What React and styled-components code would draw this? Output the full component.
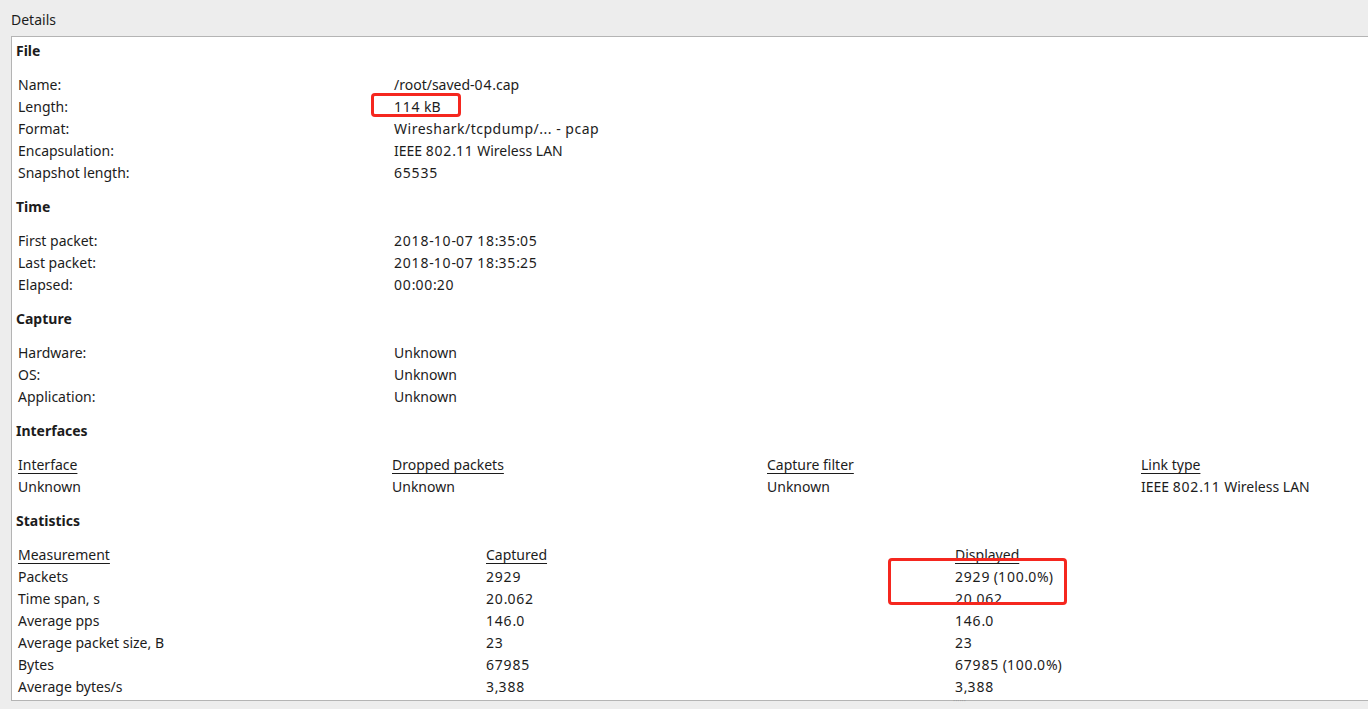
import React from "react";
import styled, { createGlobalStyle } from "styled-components";

const GlobalStyle = createGlobalStyle`
  html, body {
    margin: 0;
    padding: 0;
    overflow: hidden;
    background: #ededed;
  }
  body {
    font-family: "Noto Sans", "Open Sans", sans-serif;
    font-size: 14px;
    color: #1c1c1c;
  }
`;

const file = [
  ["Name:", "/root/saved-04.cap"],
  ["Length:", "114 kB"],
  ["Format:", "Wireshark/tcpdump/... - pcap"],
  ["Encapsulation:", "IEEE 802.11 Wireless LAN"],
  ["Snapshot length:", "65535"],
];

const time = [
  ["First packet:", "2018-10-07 18:35:05"],
  ["Last packet:", "2018-10-07 18:35:25"],
  ["Elapsed:", "00:00:20"],
];

const capture = [
  ["Hardware:", "Unknown"],
  ["OS:", "Unknown"],
  ["Application:", "Unknown"],
];

const interfaces = {
  head: ["Interface", "Dropped packets", "Capture filter", "Link type"],
  rows: [["Unknown", "Unknown", "Unknown", "IEEE 802.11 Wireless LAN"]],
};

const stats = {
  head: ["Measurement", "Captured", "Displayed"],
  rows: [
    ["Packets", "2929", "2929 (100.0%)"],
    ["Time span, s", "20.062", "20.062"],
    ["Average pps", "146.0", "146.0"],
    ["Average packet size, B", "23", "23"],
    ["Bytes", "67985", "67985 (100.0%)"],
    ["Average bytes/s", "3,388", "3,388"],
  ],
};

function Text({ value }) {
  return value
    .split(/(\d+)/)
    .map((part, i) => (/^\d+$/.test(part) ? <Num key={i}>{part}</Num> : part));
}

function Section({ title, cols, head, rows }) {
  return (
    <SectionBox>
      <Heading>{title}</Heading>
      <Table $cols={cols}>
        {head && head.map((h) => <HeadCell key={h}>{h}</HeadCell>)}
        {rows.map((r, i) =>
          r.map((c, j) => (
            <Cell key={i + "-" + j} $wide={c.includes("...")}>
              <Text value={c} />
            </Cell>
          ))
        )}
      </Table>
    </SectionBox>
  );
}

export default function App() {
  return (
    <Page>
      <GlobalStyle />
      <Title>Details</Title>
      <Panel>
        <Section title="File" cols="376px 1fr" rows={file} />
        <Section title="Time" cols="376px 1fr" rows={time} />
        <Section title="Capture" cols="376px 1fr" rows={capture} />
        <Section title="Interfaces" cols="374px 375px 374px 1fr" head={interfaces.head} rows={interfaces.rows} />
        <Section title="Statistics" cols="468px 469px 1fr" head={stats.head} rows={stats.rows} />
      </Panel>
      <Grip>······</Grip>
      <Mark style={{ left: 371, top: 93, width: 90, height: 24 }} />
      <Mark style={{ left: 888, top: 558, width: 179, height: 47 }} />
    </Page>
  );
}

const Page = styled.div`
  position: relative;
  height: 709px;
  padding-left: 11px;
  overflow: hidden;
`;

const Title = styled.div`
  padding-top: 9px;
  line-height: 22px;
  height: 22px;
`;

const Panel = styled.div`
  margin-top: 5px;
  width: 1500px;
  height: 665px;
  box-sizing: border-box;
  background: #ffffff;
  border: 1px solid #b4b4b4;
  border-right: none;
  padding: 3px 0 0 4px;
  overflow: hidden;
`;

const SectionBox = styled.div`
  margin-bottom: 12px;
`;

const Heading = styled.div`
  font-weight: bold;
  line-height: 22px;
  margin-bottom: 12px;
`;

const Table = styled.div`
  display: grid;
  grid-template-columns: ${(p) => p.$cols};
  padding-left: 2px;
`;

const Cell = styled.div`
  line-height: 22px;
  height: 22px;
  white-space: nowrap;
  letter-spacing: ${(p) => (p.$wide ? "0.5px" : "0")};
`;

const HeadCell = styled(Cell)`
  text-decoration: underline;
  text-underline-offset: 3px;
`;

const Num = styled.span`
  letter-spacing: 0.8px;
`;

const Grip = styled.div`
  position: absolute;
  left: 953px;
  top: 696px;
  font-size: 8px;
  color: #9a9a9a;
  line-height: 10px;
`;

const Mark = styled.div`
  position: absolute;
  border: 3px solid #f5271f;
  border-radius: 4px;
  box-sizing: border-box;
  pointer-events: none;
`;
